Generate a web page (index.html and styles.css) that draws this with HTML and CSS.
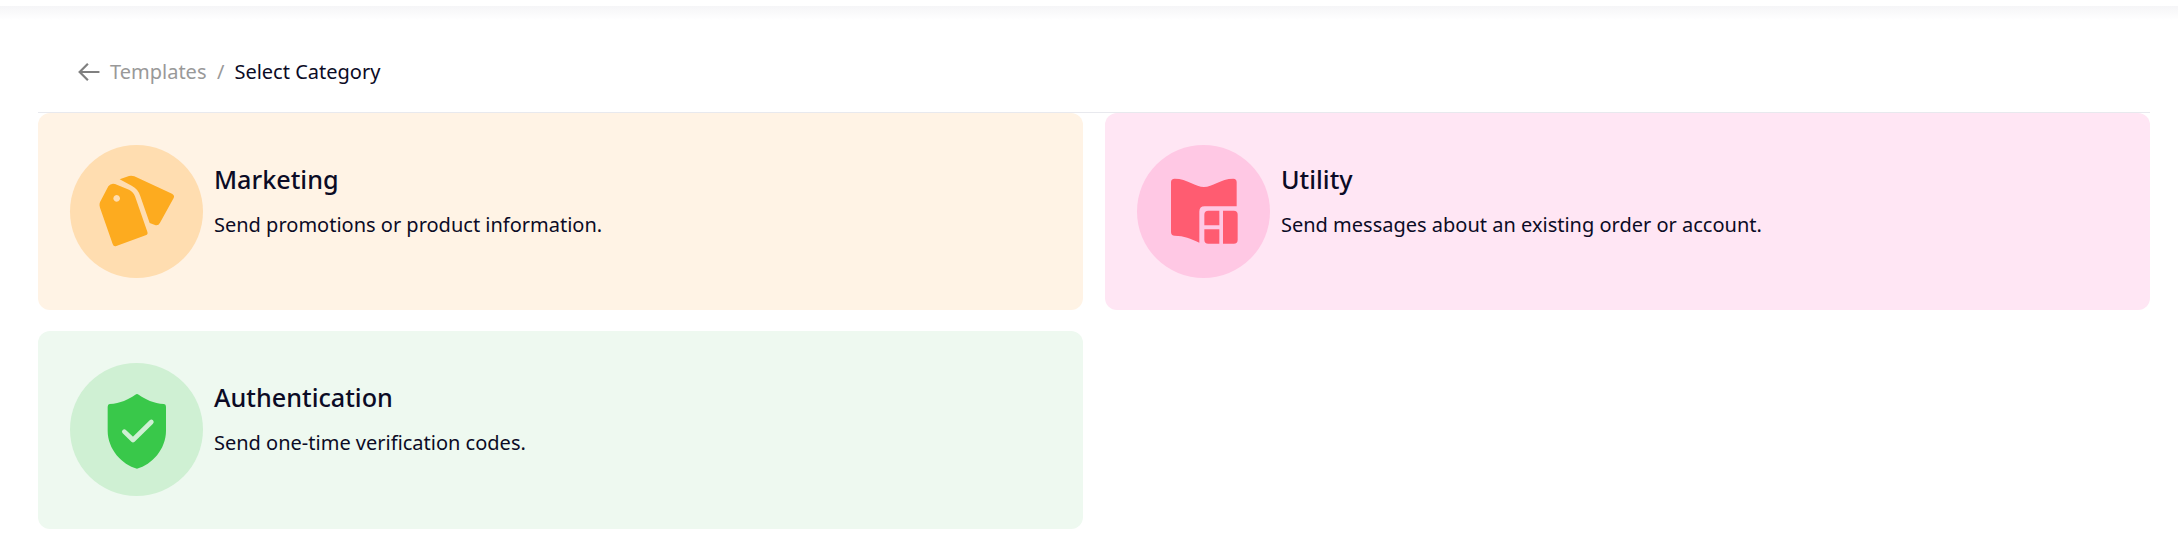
FILE: index.html
```html
<!DOCTYPE html>
<html lang="en">
<head>
<meta charset="utf-8">
<title>Select Category</title>
<link rel="stylesheet" href="styles.css">
</head>
<body>
<div class="topshade"></div>
<main class="page">
  <nav class="crumbs">
    <svg class="back" viewBox="0 0 20 18" width="22" height="20"><path d="M19.500 9H2M9 1.500L1.500 9L9 16.500" fill="none" stroke="#808080" stroke-width="2"/></svg>
    <span class="crumb-link">Templates</span>
    <span class="crumb-sep">/</span>
    <span class="crumb-current">Select Category</span>
  </nav>
  <section class="cards">
    <article class="card card-marketing">
      <div class="badge">
        <svg class="icon" viewBox="170 185 240 240">
          <path d="M238 207L266 197Q274 195 282 198L395 250Q404 255 400 263L359 337Q354 347 344 344L328 338L300 258Q294 236 274 226Z" fill="#fdab1f"/>
          <path fill-rule="evenodd" d="M204 228Q212 217 224 221L266 238Q279 244 284 258L321 364Q324 372 316 375L228 407Q220 410 217 401L179 292Q175 280 182 270ZM229 254a10 10 0 1 0 .01 0Z" fill="#fdab1f"/>
        </svg>
      </div>
      <div class="copy">
        <h2>Marketing</h2>
        <p>Send promotions or product information.</p>
      </div>
    </article>
    <article class="card card-utility">
      <div class="badge">
        <svg class="icon" viewBox="190 185 240 240">
          <path d="M211 216Q211 205 222 205C260 205 285 230 310 230C335 230 360 205 398 205Q408 205 408 216V288H312Q296 288 296 304V397C270 385 250 376 222 376Q211 376 211 365Z" fill="#ff5c71"/>
          <path d="M311 345V313Q311 301 323 301H356V345Z" fill="#ff5c71"/>
          <path d="M311 357H356V400H323Q311 400 311 388Z" fill="#ff5c71"/>
          <path d="M367 301H399Q411 301 411 313V388Q411 400 399 400H367Z" fill="#ff5c71"/>
        </svg>
      </div>
      <div class="copy">
        <h2>Utility</h2>
        <p>Send messages about an existing order or account.</p>
      </div>
    </article>
    <article class="card card-auth">
      <div class="badge">
        <svg class="icon" viewBox="170 208 240 240">
          <path d="M285 222Q290 218 295 222C315 236 340 248 371 250Q377 251 377 258V330C377 385 335 432 290 444C245 432 202 385 202 330V258Q202 251 208 250C240 248 265 236 285 222Z" fill="#39c84a"/>
          <path d="M252 333L278 358L333 304" fill="none" stroke="#cff0d3" stroke-width="14" stroke-linecap="round" stroke-linejoin="round"/>
        </svg>
      </div>
      <div class="copy">
        <h2>Authentication</h2>
        <p>Send one-time verification codes.</p>
      </div>
    </article>
  </section>
</main>
</body>
</html>
```
FILE: styles.css
```css
* { box-sizing: border-box; }
html, body { margin: 0; padding: 0; background: #fff; }
body {
  padding-top: 6px;
  font-family: "Noto Sans", "Open Sans", sans-serif;
  color: #0b0b25;
}
.topshade {
  height: 14px;
  background: linear-gradient(#f5f5f7, #fff);
}
.page { padding: 0 28px 0 38px; }
.crumbs {
  display: flex;
  align-items: center;
  height: 93px;
  padding: 11px 0 0 40px;
  border-bottom: 1px solid #e8e9ee;
  font-size: 20px;
}
.back { margin-right: 10px; }
.crumb-link { color: #999; }
.crumb-sep { color: #999; margin: 0 10px 0 10.500px; }
.crumb-current { color: #0b0b25; }
.cards {
  display: grid;
  grid-template-columns: 1fr 1fr;
  column-gap: 22px;
  row-gap: 21px;
}
.card {
  display: flex;
  align-items: flex-start;
  gap: 11px;
  height: 197px;
  padding: 32px;
  border-radius: 12px;
}
.badge {
  flex: none;
  display: flex;
  align-items: center;
  justify-content: center;
  width: 133px;
  height: 133px;
  border-radius: 50%;
}
.icon { width: 80px; height: 80px; }
.card-marketing { background: #fff3e5; }
.card-marketing .badge { background: #ffddb0; }
.card-utility { background: #ffe6f4; }
.card-utility .badge { background: #ffc8e4; }
.card-auth { height: 198px; background: #eef9f0; }
.card-auth .badge { background: #cff0d3; }
.copy { padding-top: 16px; }
.copy h2 {
  margin: 0;
  font-size: 25.200px;
  line-height: 36px;
  font-weight: 500;
}
.copy p {
  margin: 14px 0 0;
  font-size: 20px;
  line-height: 28px;
}
```
